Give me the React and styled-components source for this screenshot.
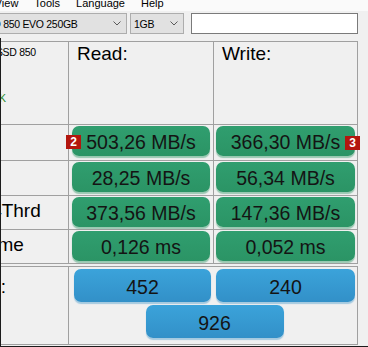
import React from "react";
import styled, { createGlobalStyle } from "styled-components";

const Global = createGlobalStyle`
  html, body { margin: 0; padding: 0; background: #f0f0f0; }
  body { font-family: "Liberation Sans", Arial, sans-serif; }
  #root { width: 368px; height: 347px; overflow: hidden; }
`;

const Window = styled.div`
  width: 368px;
  height: 347px;
  overflow: hidden;
  background: #f0f0f0;
  display: flex;
  flex-direction: column;
`;

const MenuBar = styled.div`
  flex: none;
  height: 17px;
  margin-top: -6px;
  margin-left: -82px;
  background: #fafafa;
  display: flex;
  align-items: center;
  font-size: 11px;
  color: #000;
`;

const MenuItem = styled.span`
  padding: 0 8px;
  white-space: nowrap;
`;

const ToolRow = styled.div`
  flex: none;
  height: 27px;
  box-sizing: border-box;
  padding-top: 2px;
  margin-left: -69px;
  display: flex;
  align-items: flex-start;
`;

const Combo = styled.div`
  flex: none;
  width: ${(p) => p.$w}px;
  margin-right: ${(p) => p.$gap}px;
  height: 21px;
  box-sizing: border-box;
  border: 1px solid #adadad;
  background: #e1e1e1;
  display: flex;
  align-items: center;
  padding: 0 5px 0 3px;
  font-size: 10.5px;
  letter-spacing: -0.3px;
  color: #000;
  white-space: nowrap;
`;

const ComboText = styled.span`
  flex: 1;
  overflow: hidden;
`;

const TextBox = styled.div`
  flex: none;
  width: 167px;
  height: 21px;
  box-sizing: border-box;
  border: 1px solid #7a7a7a;
  background: #fff;
`;

const Board = styled.div`
  flex: 1;
  border-left: 1px solid #1b1b1b;
  border-bottom: 1px solid #1b1b1b;
  overflow: hidden;
  padding-top: 3px;
`;

const Sheet = styled.div`
  margin-left: -51px;
  width: 408px;
`;

const Table = styled.div`
  border-top: 1px solid #a0a0a0;
  margin-top: ${(p) => p.$mt || 0}px;
`;

const Row = styled.div`
  display: grid;
  grid-template-columns: ${(p) => p.$cols || "119px 145px 144px"};
  height: ${(p) => p.$h}px;
  box-sizing: border-box;
  border-bottom: 1px solid #a0a0a0;
`;

const LabelCell = styled.div`
  border-right: 1px solid #a0a0a0;
  padding: ${(p) => p.$pad || "0 0 3px 1px"};
  display: flex;
  flex-direction: column;
  justify-content: ${(p) => (p.$top ? "flex-start" : "center")};
  font-size: 19px;
  line-height: 22px;
  color: #000;
  white-space: nowrap;
  overflow: hidden;
`;

const InfoLine = styled.div`
  font-size: 10.5px;
  line-height: 15px;
  letter-spacing: -0.3px;
  color: ${(p) => p.$color || "#000"};
  margin-top: ${(p) => p.$mt || 0}px;
`;

const Cell = styled.div`
  position: relative;
  border-right: 1px solid #a0a0a0;
  padding: ${(p) => p.$pad};
`;

const HeadTitle = styled.div`
  font-size: 19px;
  line-height: 22px;
  padding: 1px 0 0 8px;
  color: #000;
`;

const Pill = styled.div`
  height: ${(p) => p.$h || 30}px;
  box-sizing: border-box;
  border-radius: 7px;
  display: flex;
  align-items: center;
  justify-content: center;
  padding-top: 3px;
  font-size: 19.5px;
  color: #141414;
  white-space: nowrap;
`;

const GreenPill = styled(Pill)`
  background: linear-gradient(#309e6f, #2b9465);
  box-shadow: 0 2px 1px rgba(45, 150, 100, 0.45);
`;

const BluePill = styled(Pill)`
  background: linear-gradient(#3ba3da, #3290c8);
  box-shadow: 0 2px 1px rgba(50, 145, 200, 0.4);
  width: ${(p) => p.$w}px;
`;

const Badge = styled.span`
  position: absolute;
  top: ${(p) => p.$top}px;
  left: ${(p) => p.$left}px;
  width: 15px;
  height: 14px;
  background: #b3160e;
  color: #fff;
  font-weight: bold;
  font-size: 12px;
  line-height: 14px;
  text-align: center;
`;

const ScoreArea = styled.div`
  border-right: 1px solid #a0a0a0;
  padding: 2px 0 0 5px;
  display: grid;
  grid-template-columns: 137px 139px;
  column-gap: 5px;
  row-gap: 3px;
  align-content: start;
`;

const CenterSlot = styled.div`
  grid-column: 1 / span 2;
  justify-self: center;
`;

const Chevron = () => (
  <svg width="8" height="5" viewBox="0 0 8 5" fill="none">
    <path d="M0.5 0.5 L4 4 L7.5 0.5" stroke="#5a5a5a" strokeWidth="1" />
  </svg>
);

const rows = [
  { label: "Seq", h: 36, read: "503,26 MB/s", write: "366,30 MB/s", badges: true },
  { label: "4K", h: 35, read: "28,25 MB/s", write: "56,34 MB/s" },
  { label: "4K-64Thrd", h: 34, read: "373,56 MB/s", write: "147,36 MB/s" },
  { label: "Acc.time", h: 34, read: "0,126 ms", write: "0,052 ms" },
];

export default function App() {
  return (
    <>
      <Global />
      <Window>
        <MenuBar>
          {["File", "Edit", "View", "Tools", "Language", "Help"].map((m) => (
            <MenuItem key={m}>{m}</MenuItem>
          ))}
        </MenuBar>
        <ToolRow>
          <Combo $w={196} $gap={3}>
            <ComboText>Samsung SSD 850 EVO 250GB</ComboText>
            <Chevron />
          </Combo>
          <Combo $w={54} $gap={7}>
            <ComboText>1GB</ComboText>
            <Chevron />
          </Combo>
          <TextBox />
        </ToolRow>
        <Board>
          <Sheet>
            <Table>
              <Row $h={83}>
                <LabelCell $top $pad="3px 0 0 1px">
                  <InfoLine>Samsung SSD 850</InfoLine>
                  <InfoLine $mt={31} $color="#1f8a1f">iaStorA - OK</InfoLine>
                </LabelCell>
                <Cell>
                  <HeadTitle>Read:</HeadTitle>
                </Cell>
                <Cell>
                  <HeadTitle>Write:</HeadTitle>
                </Cell>
              </Row>
              {rows.map((r) => (
                <Row key={r.label} $h={r.h}>
                  <LabelCell>{r.label}</LabelCell>
                  <Cell $pad="1px 3px 0 3px">
                    <GreenPill>{r.read}</GreenPill>
                    {r.badges && <Badge $top={10} $left={-3}>2</Badge>}
                  </Cell>
                  <Cell $pad="1px 2px 0 2px">
                    <GreenPill>{r.write}</GreenPill>
                    {r.badges && <Badge $top={11} $left={131}>3</Badge>}
                  </Cell>
                </Row>
              ))}
            </Table>
            <Table $mt={2}>
              <Row $h={78} $cols="119px 289px">
                <LabelCell $top $pad="9px 0 0 1px">Score:</LabelCell>
                <ScoreArea>
                  <BluePill $h={33}>452</BluePill>
                  <BluePill $h={33}>240</BluePill>
                  <CenterSlot>
                    <BluePill $h={33} $w={138}>926</BluePill>
                  </CenterSlot>
                </ScoreArea>
              </Row>
            </Table>
          </Sheet>
        </Board>
      </Window>
    </>
  );
}
